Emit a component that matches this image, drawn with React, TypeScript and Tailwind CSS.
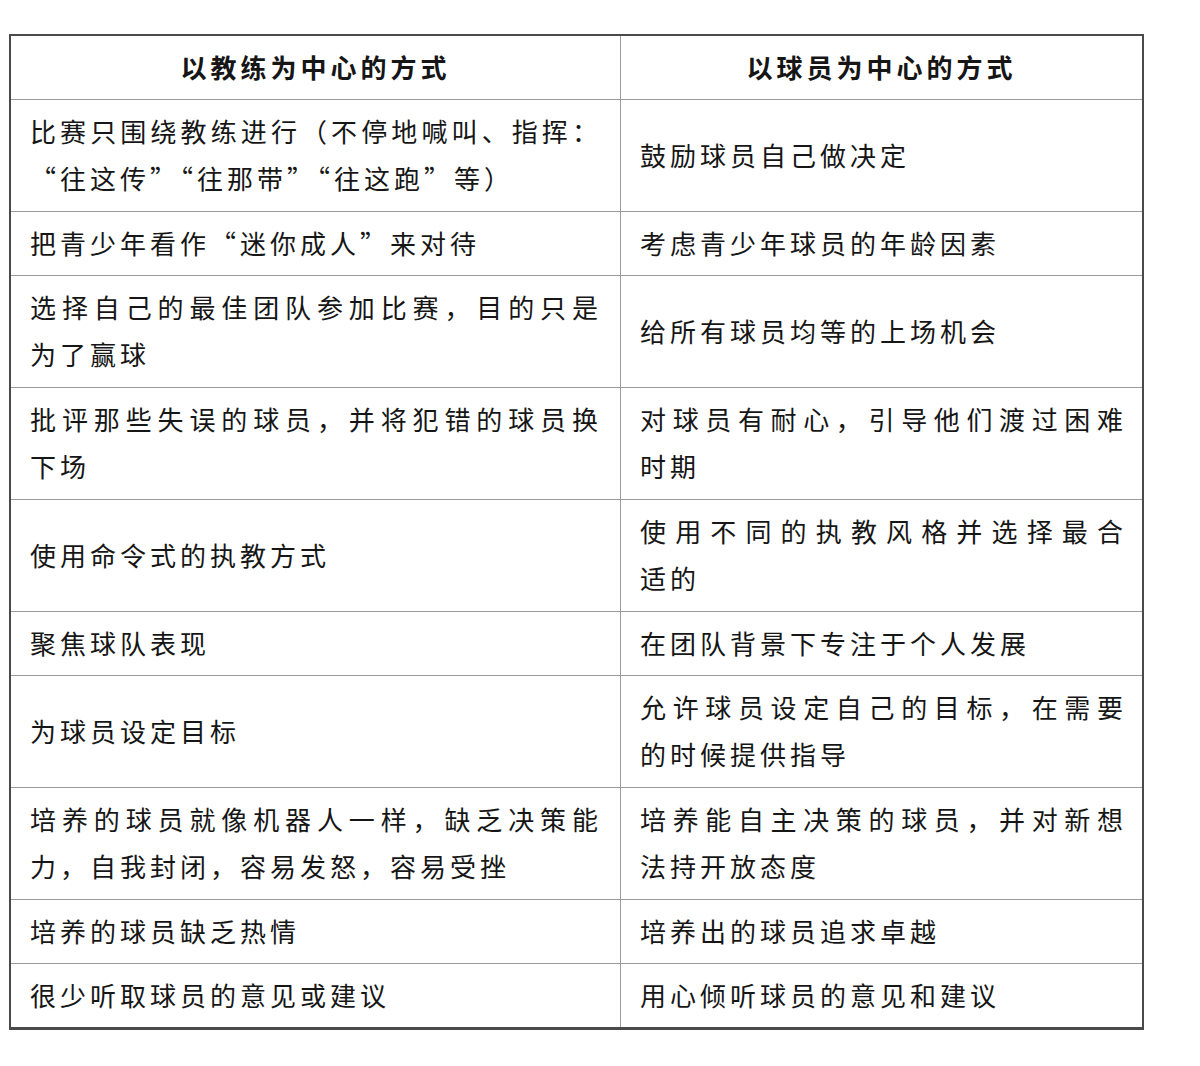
const rows: [string[], string[]][] = [
  [["比赛只围绕教练进行（不停地喊叫、指挥：", "“往这传”“往那带”“往这跑”等）"], ["鼓励球员自己做决定"]],
  [["把青少年看作“迷你成人”来对待"], ["考虑青少年球员的年龄因素"]],
  [["选择自己的最佳团队参加比赛，目的只是", "为了赢球"], ["给所有球员均等的上场机会"]],
  [["批评那些失误的球员，并将犯错的球员换", "下场"], ["对球员有耐心，引导他们渡过困难", "时期"]],
  [["使用命令式的执教方式"], ["使用不同的执教风格并选择最合", "适的"]],
  [["聚焦球队表现"], ["在团队背景下专注于个人发展"]],
  [["为球员设定目标"], ["允许球员设定自己的目标，在需要", "的时候提供指导"]],
  [["培养的球员就像机器人一样，缺乏决策能", "力，自我封闭，容易发怒，容易受挫"], ["培养能自主决策的球员，并对新想", "法持开放态度"]],
  [["培养的球员缺乏热情"], ["培养出的球员追求卓越"]],
  [["很少听取球员的意见或建议"], ["用心倾听球员的意见和建议"]],
];

// each wrapped line except the last is stretched to the full cell width
const CellText = ({ lines }: { lines: string[] }) => (
  <div className="w-full">
    {lines.map((line, i) =>
      i < lines.length - 1 ? (
        <div key={i} className="whitespace-nowrap text-justify tracking-[2px] [text-align-last:justify]">
          {line}
        </div>
      ) : (
        <div key={i} className="whitespace-nowrap tracking-[4px]">
          {line}
        </div>
      )
    )}
  </div>
);

export default function App() {
  return (
    <div className="min-h-[1066px] bg-white pl-[9px] pt-[34px] font-['Noto_Sans_CJK_SC','Noto_Sans',sans-serif] text-[26px] leading-[47px] text-[#161616]">
      <div className="w-[1135px] border-2 border-b-[3px] border-[#4a4a4a]">
        {/* Header */}
        <div className="flex h-[63px]">
          <div className="flex w-[609px] items-center justify-center pb-[3px] font-bold tracking-[4px]">
            以教练为中心的方式
          </div>
          <div className="flex flex-1 items-center justify-center border-l border-[#9a9a9a] pb-[3px] font-bold tracking-[4px]">
            以球员为中心的方式
          </div>
        </div>

        {rows.map(([left, right], i) => {
          const tall = Math.max(left.length, right.length) > 1;
          return (
            <div
              key={i}
              className={`flex border-t border-[#9a9a9a] ${tall ? "h-[112px]" : "h-[64px]"}`}
            >
              <div className="flex w-[609px] items-center pb-[3px] pl-[19px] pr-[20px]">
                <CellText lines={left} />
              </div>
              <div className="flex flex-1 items-center border-l border-[#9a9a9a] pb-[3px] pl-[19px] pr-[17px]">
                <CellText lines={right} />
              </div>
            </div>
          );
        })}
      </div>
    </div>
  );
}
